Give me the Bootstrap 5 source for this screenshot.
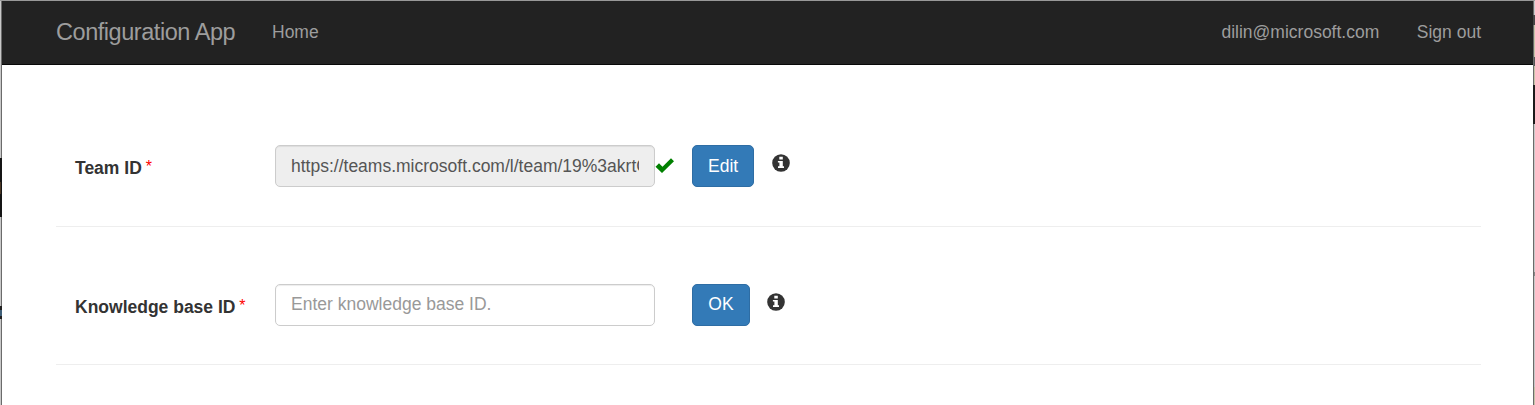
<!DOCTYPE html>
<html lang="en">
<head>
<meta charset="utf-8">
<meta name="viewport" content="width=device-width, initial-scale=1">
<title>Configuration App</title>
<link href="https://cdn.jsdelivr.net/npm/bootstrap@5.3.0/dist/css/bootstrap.min.css" rel="stylesheet">
<style>
  body { font-family: "Liberation Sans", Arial, sans-serif; font-size: 17.5px; line-height: 25px; color: #333; background: #fff; }
  .window-frame { height: 405px; border-top: 1px solid #999; overflow: hidden; }
  .edge { width: 2px; flex: none; }
  .edge-left { background:
    linear-gradient(#3f5f78, #3f5f78) 0 309px / 2px 6px no-repeat,
    linear-gradient(#222, #222) 0 305px / 2px 13px no-repeat,
    linear-gradient(#4a3624, #4a3624) 0 181px / 1px 12px no-repeat,
    linear-gradient(#151515, #151515) 0 157px / 2px 59px no-repeat,
    linear-gradient(90deg, #c8c8c8 1px, #6b6b6b 1px); }
  .edge-right { background:
    linear-gradient(#444, #444) 0 14px / 2px 10px no-repeat,
    linear-gradient(#555, #555) 1px 56px / 1px 9px no-repeat,
    linear-gradient(#c6c3a8, #c6c3a8) 1px 24px / 1px 60px no-repeat,
    linear-gradient(#1b1b1b, #1b1b1b) 0 84px / 2px 39px no-repeat,
    linear-gradient(#888, #888) 1px 271px / 1px 4px no-repeat,
    linear-gradient(#c6c3a8, #c6c3a8) 1px 386px / 1px 18px no-repeat,
    linear-gradient(90deg, #6b6b6b 1px, #c8c8c8 1px); }
  .app-nav { height: 64px; background: #222; border-bottom: 1px solid #080808; padding: 0 52px 0 54px; }
  .app-nav a { color: #9d9d9d; }
  .app-nav .navbar-brand { width: 179px; font-size: 23.5px; letter-spacing: -.45px; line-height: 25px; margin: 0 37px 1px 0; }
  .app-nav .nav-link { line-height: 25px; }
  .account-links { gap: 37.5px; }
  .settings { padding: 80px 52px 0 54px; }
  .setting { height: 82px; border-bottom: 1px solid #eee; }
  .setting + .setting { height: 138px; padding-top: 57px; }
  .setting-label { width: 219px; padding: 11px 0 0 19px; font-weight: 700; white-space: nowrap; }
  .required { color: red; font-size: 16px; line-height: 1; font-weight: 400; position: relative; top: -2px; left: -1px; }
  .id-field { width: 380px; height: 42px; padding: 7px 15px; font-size: 17.5px; line-height: 25px; color: #555; border: 1px solid #ccc; border-radius: 5px; box-shadow: inset 0 1px 1px rgba(0,0,0,.075); }
  .id-field:disabled { background: #eee; color: #555; }
  .id-field::placeholder { color: #999; }
  .id-field:enabled, .btn-ok { padding-top: 6px; padding-bottom: 8px; }
  .status { width: 37px; padding-top: 12px; line-height: 0; }
  .btn-save { height: 42px; padding-left: 15px; padding-right: 15px; font-size: 17.5px; line-height: 25px; color: #fff; background: #337ab7; border: 1px solid #2e6da4; border-radius: 5px; }
  .btn-ok { width: 58px; }
  .info { margin: 9px 0 0 18px; }
</style>
</head>
<body>
<div class="window-frame d-flex">
  <div class="edge edge-left"></div>
  <div class="flex-grow-1">
    <nav class="app-nav navbar navbar-expand d-flex">
      <a class="navbar-brand p-0" href="#">Configuration App</a>
      <a class="nav-link p-0" href="#">Home</a>
      <div class="account-links d-flex ms-auto">
        <a class="nav-link p-0" href="#">dilin@microsoft.com</a>
        <a class="nav-link p-0" href="#">Sign out</a>
      </div>
    </nav>
    <main class="settings">
      <div class="setting d-flex align-items-start">
        <label class="setting-label" for="team">Team ID <span class="required">*</span></label>
        <input id="team" class="id-field form-control" value="https://teams.microsoft.com/l/team/19%3akrtCq" disabled>
        <div class="status"><svg width="20" height="17" viewBox="0 0 20 17"><path fill="green" d="M.5 9.8 4 6.3 7.5 9.8 16 1.3 19 4.2 7 16Z"/></svg></div>
        <button class="btn btn-save">Edit</button>
        <svg class="info" width="18" height="18" viewBox="0 0 18 18"><circle cx="9" cy="9" r="8.8" fill="#333"/><path fill="#fff" d="M7.3 2.8h3.5v2.6H7.3zM5.9 7h4.9v5.3H12v1.6H6v-1.6h1.4V8.5H5.9z"/></svg>
      </div>
      <div class="setting d-flex align-items-start">
        <label class="setting-label" for="kb">Knowledge base ID <span class="required">*</span></label>
        <input id="kb" class="id-field form-control" placeholder="Enter knowledge base ID.">
        <div class="status"></div>
        <button class="btn btn-save btn-ok">OK</button>
        <svg class="info ms-3" style="" width="20" height="18" viewBox="-1 0 20 18"><circle cx="9" cy="9" r="8.8" fill="#333"/><path fill="#fff" d="M7.3 2.8h3.5v2.6H7.3zM5.9 7h4.9v5.3H12v1.6H6v-1.6h1.4V8.5H5.9z"/></svg>
      </div>
    </main>
  </div>
  <div class="edge edge-right"></div>
</div>
<script src="https://cdn.jsdelivr.net/npm/bootstrap@5.3.0/dist/js/bootstrap.bundle.min.js"></script>
</body>
</html>
